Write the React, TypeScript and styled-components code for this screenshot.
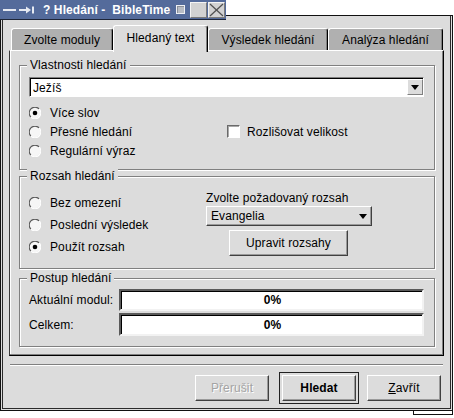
import React from "react";
import styled, { createGlobalStyle } from "styled-components";

const Global = createGlobalStyle`
  html, body { margin: 0; padding: 0; background: #fff; }
  body {
    font-family: "Liberation Sans", Arial, Helvetica, sans-serif;
    font-size: 12px;
    letter-spacing: 0.1px;
    color: #000;
  }
  * { box-sizing: border-box; }
`;

const BG = "#dcdcdc";

const Window = styled.div`
  width: 453px;
  display: flex;
  flex-direction: column;
`;

const TitleRow = styled.div`
  display: flex;
  height: 20px;
`;

const TitleTab = styled.div`
  width: 226px;
  height: 20px;
  background: #546b9b;
  border-bottom: 1px solid #1e2638;
  display: flex;
  align-items: center;
  color: #fff;
  font-weight: bold;
  font-size: 12px;
  padding-left: 2px;
`;

const TitleText = styled.span`
  white-space: pre;
  margin-left: 7px;
  line-height: 14px;
  flex: 1;
`;

const StickyIcon = styled.span`
  width: 9px;
  height: 9px;
  border: 1px solid #eef0f4;
  background: #b8bcc4;
  box-shadow: inset 1px 1px 0 #8a8f99;
  margin-right: 5px;
`;

const WinButton = styled.span`
  width: 17px;
  height: 16px;
  background: #d2d2d2;
  border: 1px solid;
  border-color: #f4f4f4 #7a7a7a #7a7a7a #f4f4f4;
  display: flex;
  align-items: center;
  justify-content: center;
  margin-right: 1px;
`;

const TitleCap = styled.div`
  flex: 1;
  align-self: flex-end;
  height: 5px;
  background: ${BG};
  border-top: 1px solid #111;
  border-right: 1px solid #111;
  box-shadow: inset -1px 0 0 ${BG}, inset -2px 0 0 #2a2a2a;
`;

const Frame = styled.div`
  height: 391px;
  background: ${BG};
  border: 1px solid #111;
  border-top: none;
  box-shadow: inset 1px 0 0 ${BG}, inset -1px 0 0 ${BG}, inset 0 -1px 0 ${BG},
    inset 2px 0 0 #2a2a2a, inset -2px 0 0 #2a2a2a, inset 0 -2px 0 #2a2a2a;
  padding: 5px 8px 0 8px;
  display: flex;
  flex-direction: column;
`;

const GripRow = styled.div`
  display: flex;
  justify-content: flex-end;
`;

const Grip = styled.div`
  width: 40px;
  height: 4px;
  background: #fff;
  border: 1px solid #111;
  border-top: none;
`;

const TabBar = styled.div`
  display: flex;
  align-items: flex-start;
  height: 25px;
  padding-left: 2px;
`;

const Tab = styled.div<{ $w: number; $active?: boolean }>`
  width: ${(p) => p.$w}px;
  height: ${(p) => (p.$active ? 27 : 22)}px;
  margin-top: ${(p) => (p.$active ? 0 : 3)}px;
  margin-bottom: ${(p) => (p.$active ? -2 : 0)}px;
  padding-bottom: ${(p) => (p.$active ? 2 : 0)}px;
  position: relative;
  z-index: ${(p) => (p.$active ? 1 : 0)};
  background: ${(p) => (p.$active ? BG : "#b0b0b0")};
  border-top: 1px solid #fff;
  border-left: 1px solid #fff;
  border-right: 1px solid #000;
  border-radius: 3px 3px 0 0;
  box-shadow: inset -1px 0 0 #808080;
  display: flex;
  align-items: center;
  justify-content: center;
  font-size: 12px;
  white-space: nowrap;
`;

const Pane = styled.div`
  height: 306px;
  border: 1px solid;
  border-color: #fff #000 #000 #3a3a3a;
  box-shadow: inset -1px -1px 0 #808080, inset 1px 0 0 #fff;
  padding: 14px 8px 0 9px;
  display: flex;
  flex-direction: column;
`;

const Group = styled.div<{ $h: number; $mt: number }>`
  height: ${(p) => p.$h}px;
  margin-top: ${(p) => p.$mt}px;
  border: 1px solid #808080;
  box-shadow: inset 1px 1px 0 #fff, 1px 1px 0 #fff;
  padding: 0 10px 0 9px;
  display: flex;
  flex-direction: column;
`;

const GroupTitle = styled.div`
  align-self: flex-start;
  margin: -8px 0 0 -2px;
  padding: 0 3px;
  background: ${BG};
  line-height: 14px;
  white-space: nowrap;
`;

const EditCombo = styled.div`
  margin-top: 5px;
  width: 395px;
  height: 20px;
  border: 1px solid;
  border-color: #808080 #fff #fff #808080;
  box-shadow: inset 1px 1px 0 #000;
  background: #fff;
  display: flex;
  align-items: stretch;
`;

const ComboText = styled.div`
  flex: 1;
  padding-left: 3px;
  padding-top: 1px;
  display: flex;
  align-items: center;
`;

const ComboArrow = styled.div`
  width: 16px;
  margin: 1px 0 1px 0;
  background: ${BG};
  border: 1px solid;
  border-color: #fff #808080 #808080 #fff;
  display: flex;
  align-items: center;
  justify-content: center;
`;

const Triangle = styled.span`
  width: 0;
  height: 0;
  border-left: 4px solid transparent;
  border-right: 4px solid transparent;
  border-top: 5px solid #000;
`;

const OptionsGrid = styled.div`
  margin-top: 6px;
  display: grid;
  grid-template-columns: 198px 1fr;
  grid-auto-rows: 19px;
`;

const OptionRow = styled.label<{ $h?: number }>`
  display: flex;
  align-items: center;
  height: ${(p) => p.$h ?? 19}px;
  white-space: nowrap;
`;

const OptionText = styled.span<{ $gap: number }>`
  margin-left: ${(p) => p.$gap}px;
`;

const CheckBox = styled.span`
  width: 13px;
  height: 13px;
  background: #fff;
  border: 1px solid;
  border-color: #6a6a6a #fff #fff #6a6a6a;
  box-shadow: inset 1px 1px 0 #a8a8a8;
`;

const Radio = ({ on }: { on?: boolean }) => (
  <svg width="12" height="12" viewBox="0 0 12 12">
    <circle cx="6" cy="6" r="5.3" fill="#f6f6f6" />
    <path d="M1.9 10.1 A5.6 5.6 0 0 1 10.1 1.9" fill="none" stroke="#5a5a5a" strokeWidth="1.1" />
    <path d="M10.1 1.9 A5.6 5.6 0 0 1 1.9 10.1" fill="none" stroke="#ffffff" strokeWidth="1.1" />
    {on && <circle cx="6" cy="6" r="2.3" fill="#000" />}
  </svg>
);

const RangeBody = styled.div`
  margin-top: 8px;
  display: grid;
  grid-template-columns: 177px 1fr;
`;

const RadioColumn = styled.div`
  padding-top: 1px;
  display: flex;
  flex-direction: column;
`;

const RangeColumn = styled.div`
  display: flex;
  flex-direction: column;
  align-items: flex-start;
`;

const FieldLabel = styled.div`
  line-height: 14px;
  white-space: nowrap;
`;

const SelectCombo = styled.div`
  margin-top: 1px;
  width: 166px;
  height: 20px;
  background: ${BG};
  border: 1px solid;
  border-color: #fff #404040 #404040 #fff;
  box-shadow: inset -1px -1px 0 #9a9a9a;
  display: flex;
  align-items: center;
  justify-content: space-between;
  padding: 0 4px 0 4px;
`;

const PushButton = styled.button<{ $w: number; $disabled?: boolean; $bold?: boolean }>`
  width: ${(p) => p.$w}px;
  height: 26px;
  padding: 0;
  background: ${BG};
  border: 1px solid;
  border-color: #fff #404040 #404040 #fff;
  box-shadow: inset -1px -1px 0 #9a9a9a;
  font-family: inherit;
  font-size: 12px;
  letter-spacing: inherit;
  font-weight: ${(p) => (p.$bold ? "bold" : "normal")};
  color: ${(p) => (p.$disabled ? "#a4a4a4" : "#000")};
  text-shadow: ${(p) => (p.$disabled ? "1px 1px 0 #fff" : "none")};
  display: flex;
  align-items: center;
  justify-content: center;
  cursor: default;
`;

const EditButton = styled(PushButton)`
  margin-top: 4px;
  margin-left: 23px;
`;

const ProgressGrid = styled.div`
  margin-top: 4px;
  display: grid;
  grid-template-columns: 90px 305px;
  grid-template-rows: 22px 23px;
  row-gap: 2px;
  align-items: center;
`;

const ProgressBar = styled.div`
  height: 100%;
  background: #fff;
  border: 2px solid;
  border-color: #5a5a5a #f2f2f2 #f2f2f2 #5a5a5a;
  box-shadow: inset 1px 1px 0 #000;
  display: flex;
  align-items: center;
  justify-content: center;
  font-weight: bold;
  padding-left: 2px;
`;

const Separator = styled.div`
  margin: 8px 1px 0 1px;
  height: 2px;
  border-top: 1px solid #808080;
  border-bottom: 1px solid #fff;
`;

const ButtonRow = styled.div`
  margin-top: 6px;
  height: 32px;
  display: flex;
  justify-content: flex-end;
  align-items: center;
  padding-right: 3px;
`;

const DefaultFrame = styled.div`
  margin: 0 8px 0 10px;
  padding: 2px;
  border: 1px solid #222;
`;

const Mnemonic = styled.span`
  text-decoration: underline;
`;

const PinIcon = () => (
  <svg width="34" height="10" viewBox="0 0 34 10">
    <line x1="1" y1="5" x2="14" y2="5" stroke="#e6eaf2" strokeWidth="2" />
    <line x1="17" y1="5" x2="27" y2="5" stroke="#e6eaf2" strokeWidth="2" />
    <polygon points="24,1.5 29,5 24,8.5" fill="#e6eaf2" />
    <line x1="31" y1="1.5" x2="31" y2="8.5" stroke="#e6eaf2" strokeWidth="2" />
  </svg>
);

const CloseGlyph = () => (
  <svg width="15" height="14" viewBox="0 0 15 14">
    <line x1="1" y1="1" x2="14" y2="13" stroke="#505050" strokeWidth="1.2" />
    <line x1="14" y1="1" x2="1" y2="13" stroke="#505050" strokeWidth="1.2" />
  </svg>
);

export default function App() {
  return (
    <>
      <Global />
      <Window>
        <TitleRow>
          <TitleTab>
            <PinIcon />
            <TitleText>{"? Hledání -  BibleTime"}</TitleText>
            <StickyIcon />
            <WinButton />
            <WinButton>
              <CloseGlyph />
            </WinButton>
          </TitleTab>
          <TitleCap />
        </TitleRow>
        <Frame>
          <TabBar>
            <Tab $w={102}>Zvolte moduly</Tab>
            <Tab $w={95} $active>
              Hledaný text
            </Tab>
            <Tab $w={120}>Výsledek hledání</Tab>
            <Tab $w={115}>Analýza hledání</Tab>
          </TabBar>
          <Pane>
            <Group $h={105} $mt={0}>
              <GroupTitle>Vlastnosti hledání</GroupTitle>
              <EditCombo>
                <ComboText>Ježíš</ComboText>
                <ComboArrow>
                  <Triangle />
                </ComboArrow>
              </EditCombo>
              <OptionsGrid>
                <OptionRow>
                  <Radio on />
                  <OptionText $gap={9}>Více slov</OptionText>
                </OptionRow>
                <span />
                <OptionRow>
                  <Radio />
                  <OptionText $gap={9}>Přesné hledání</OptionText>
                </OptionRow>
                <OptionRow>
                  <CheckBox />
                  <OptionText $gap={7}>Rozlišovat velikost</OptionText>
                </OptionRow>
                <OptionRow>
                  <Radio />
                  <OptionText $gap={9}>Regulární výraz</OptionText>
                </OptionRow>
              </OptionsGrid>
            </Group>
            <Group $h={93} $mt={6}>
              <GroupTitle>Rozsah hledání</GroupTitle>
              <RangeBody>
                <RadioColumn>
                  <OptionRow $h={22}>
                    <Radio />
                    <OptionText $gap={9}>Bez omezení</OptionText>
                  </OptionRow>
                  <OptionRow $h={22}>
                    <Radio />
                    <OptionText $gap={9}>Poslední výsledek</OptionText>
                  </OptionRow>
                  <OptionRow $h={22}>
                    <Radio on />
                    <OptionText $gap={9}>Použít rozsah</OptionText>
                  </OptionRow>
                </RadioColumn>
                <RangeColumn>
                  <FieldLabel>Zvolte požadovaný rozsah</FieldLabel>
                  <SelectCombo>
                    <span>Evangelia</span>
                    <Triangle />
                  </SelectCombo>
                  <EditButton $w={119}>Upravit rozsahy</EditButton>
                </RangeColumn>
              </RangeBody>
            </Group>
            <Group $h={69} $mt={9}>
              <GroupTitle>Postup hledání</GroupTitle>
              <ProgressGrid>
                <FieldLabel>Aktuální modul:</FieldLabel>
                <ProgressBar>0%</ProgressBar>
                <FieldLabel>Celkem:</FieldLabel>
                <ProgressBar>0%</ProgressBar>
              </ProgressGrid>
            </Group>
          </Pane>
          <Separator />
          <ButtonRow>
            <PushButton $w={74} $disabled>
              Přerušit
            </PushButton>
            <DefaultFrame>
              <PushButton $w={74} $bold>
                Hledat
              </PushButton>
            </DefaultFrame>
            <PushButton $w={74}>
              <span>
                <Mnemonic>Z</Mnemonic>avřít
              </span>
            </PushButton>
          </ButtonRow>
        </Frame>
        <GripRow>
          <Grip />
        </GripRow>
      </Window>
    </>
  );
}
